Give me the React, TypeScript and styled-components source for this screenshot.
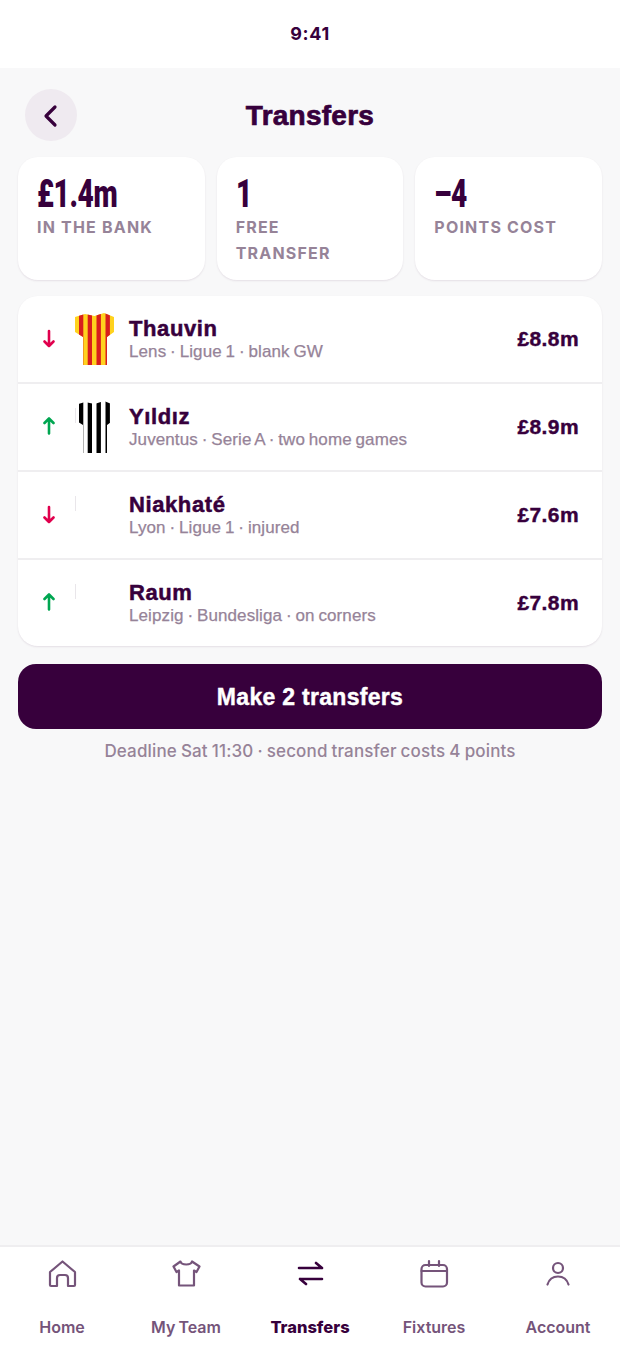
import React from "react";
import styled, { createGlobalStyle } from "styled-components";

const Global = createGlobalStyle`
  html, body { margin: 0; padding: 0; background: #f8f8f9; }
  body { font-family: Inter, "Liberation Sans", sans-serif; color: #37003c; }
  * { box-sizing: border-box; }
`;
const Grotesk = `"Liberation Sans", Inter, sans-serif`;
const Page = styled.div`
  width: 620px; height: 1347px; display: flex; flex-direction: column; background: #f8f8f9; overflow: hidden;
`;
const StatusBar = styled.div`
  height: 68px; background: #fff; display: flex; align-items: center; justify-content: center; padding-bottom: 2px;
  font-size: 18px; font-weight: 700; color: #37003c; letter-spacing: 0.7px;
`;
const Main = styled.main`
  flex: 1; display: flex; flex-direction: column; padding: 21px 18px 0;
`;
const Header = styled.header`
  display: grid; grid-template-columns: 52px 1fr 52px; align-items: center; padding: 0 7px; height: 52px;
`;
const BackButton = styled.button`
  width: 52px; height: 52px; border: 0; padding: 2px 0 0; border-radius: 50%; background: #efeaf0; color: #37003c;
  display: flex; align-items: center; justify-content: center;
`;
const Title = styled.h1`
  margin: 1px 0 0; text-align: center; font-family: ${Grotesk}; font-size: 28px; line-height: 34px; font-weight: 700;
  letter-spacing: 0.25px; color: #37003c; -webkit-text-stroke: 0.7px #37003c;
`;
const Stats = styled.section`
  display: grid; grid-template-columns: repeat(3, 1fr); gap: 12px; margin-top: 16px;
`;
const StatCard = styled.div`
  height: 123px; background: #fff; border-radius: 20px; padding: 16px 24px 16px 19px; box-shadow: 0 1px 2px rgba(55,0,60,.1);
`;
const StatValue = styled.div`
  font-family: Roboto, sans-serif; font-size: 38px; line-height: 42px; font-weight: 900; letter-spacing: -0.5px;
  color: #37003c; transform: scaleX(0.74); transform-origin: left center;
`;
const StatLabel = styled.div`
  font-size: 16px; line-height: 26px; font-weight: 700; letter-spacing: 1.2px; color: #968398; margin-top: -1px;
`;
const List = styled.section`
  margin-top: 16px; background: #fff; border-radius: 20px; box-shadow: 0 1px 2px rgba(55,0,60,.1); overflow: hidden;
`;
const Row = styled.div<{ $last?: boolean }>`
  height: ${(p) => (p.$last ? 86 : 88)}px; display: flex; align-items: center; padding: 0 23px 0 23px;
  border-bottom: ${(p) => (p.$last ? "0" : "2px solid #efeef0")};
`;
const Arrow = styled.div<{ $c: string }>`
  width: 16px; color: ${(p) => p.$c}; display: flex; justify-content: center; margin-right: 18px;
`;
const ShirtSlot = styled.div`
  width: 39px; height: 52px; margin-right: 15px; flex: none;
`;
const Info = styled.div`
  flex: 1; min-width: 0;
`;
const Name = styled.div`
  font-family: ${Grotesk}; font-size: 22px; line-height: 25px; font-weight: 700; color: #37003c;
  letter-spacing: 0.6px; -webkit-text-stroke: 0.5px #37003c;
`;
const Meta = styled.div`
  font-family: ${Grotesk}; font-size: 17px; line-height: 22px; color: #968398; font-weight: 400; letter-spacing: 0.1px;
  word-spacing: -1px; -webkit-text-stroke: 0.25px #968398;
`;
const Price = styled.div`
  font-family: ${Grotesk}; font-size: 21px; font-weight: 700; color: #37003c; letter-spacing: 0.4px; -webkit-text-stroke: 0.4px #37003c;
`;
const Cta = styled.button`
  margin-top: 18px; height: 65px; width: 100%; border: 0; border-radius: 18px; padding: 2px 0 0; background: #37003c; color: #fff;
  font: 700 23px ${Grotesk}; letter-spacing: 0.3px; -webkit-text-stroke: 0.4px #fff;
`;
const Note = styled.p`
  margin: 11px 0 0; text-align: center; font-size: 17px; line-height: 22px; font-weight: 500; color: #968398;
  letter-spacing: 0.15px; word-spacing: -0.7px;
`;
const Nav = styled.nav`
  height: 102px; background: #fff; border-top: 2px solid #efeef0; display: grid; grid-template-columns: repeat(5, 1fr);
`;
const NavItem = styled.div<{ $active?: boolean }>`
  display: flex; flex-direction: column; align-items: center; padding-top: 11px;
  color: ${(p) => (p.$active ? "#37003c" : "#75547a")};
  font-size: ${(p) => (p.$active ? 16.5 : 16)}px; font-weight: ${(p) => (p.$active ? 800 : 600)};
`;
const NavLabel = styled.span`
  margin-top: 28px; line-height: 22px; word-spacing: -1px;
`;

const ArrowIcon = ({ up }: { up?: boolean }) => (
  <svg width="14" height="20" viewBox="0 0 14 20" fill="none" stroke="currentColor" strokeWidth="2.6" strokeLinecap="round" strokeLinejoin="round">
    {up ? <path d="M7 16.5V1.5M2.5 6 7 1.5 11.5 6" /> : <path d="M7 2v15M2.5 12.5 7 17l4.5-4.5" />}
  </svg>
);

const shirtPath = "M0 4 10 1 19.5 3 29 0 39 4V19L32 24V52H8V24L0 19Z";
const bands: [number, number][] = [[4, 4.3], [12.7, 4.3], [21.5, 4.4], [30.5, 4.4]];

const Shirt = ({ id, base, stripe }: { id: string; base: string; stripe?: string }) => (
  <svg width="39" height="52" viewBox="0 0 39 52">
    <defs>
      <clipPath id={id}><path d={shirtPath} /></clipPath>
    </defs>
    <g clipPath={`url(#${id})`}>
      <rect width="39" height="52" fill={base} />
      {stripe && bands.map(([x, w]) => <rect key={x} x={x} y="0" width={w} height="52" fill={stripe} />)}
    </g>
    {base === "#ffffff" && <rect x="0" y="7" width="1" height="15" fill="#e9e6ea" />}
  </svg>
);

const rows = [
  { up: false, name: "Thauvin", meta: "Lens · Ligue 1 · blank GW", price: "£8.8m", shirt: <Shirt id="a" base="#ffd21e" stripe="#d81e1e" /> },
  { up: true, name: "Yıldız", meta: "Juventus · Serie A · two home games", price: "£8.9m", shirt: <Shirt id="b" base="#ffffff" stripe="#000000" /> },
  { up: false, name: "Niakhaté", meta: "Lyon · Ligue 1 · injured", price: "£7.6m", shirt: <Shirt id="c" base="#ffffff" /> },
  { up: true, name: "Raum", meta: "Leipzig · Bundesliga · on corners", price: "£7.8m", shirt: <Shirt id="d" base="#ffffff" /> },
];

const I = ({ children, w = 2.2 }: { children: React.ReactNode; w?: number }) => (
  <svg width="30" height="30" viewBox="0 0 30 30" fill="none" stroke="currentColor" strokeWidth={w} strokeLinecap="round" strokeLinejoin="round">{children}</svg>
);

const nav = [
  { label: "Home", icon: <I><path d="M3 14 15.5 3.5 28 14V27a1 1 0 0 1-1 1h-6V20a3 3 0 0 0-3-3h-5a3 3 0 0 0-3 3v8H4a1 1 0 0 1-1-1z" /></I> },
  { label: "My Team", icon: <I><path d="M9.5 3.5 2.5 8.5l3 5.5 2.5-1.5V27.5h15V12.5l2.5 1.5 3-5.5L21 3.5c-1 4-10.5 4-11.5 0z" /></I> },
  { label: "Transfers", active: true, icon: <I w={2.6}><path d="M4 10H27M21 5l6 5M27 21H5M5 21l6 5" /></I> },
  { label: "Fixtures", icon: <I><rect x="2.5" y="7" width="25.5" height="21.5" rx="4" /><path d="M2.5 13h25.5M10 3v5M20 3v5" /></I> },
  { label: "Account", icon: <I><circle cx="15" cy="10" r="5" /><path d="M4.5 26.5c1.5-5 5.5-8 10.5-8s9 3 10.5 8" /></I> },
];

export default function App() {
  return (
    <Page>
      <Global />
      <StatusBar>9:41</StatusBar>
      <Main>
        <Header>
          <BackButton aria-label="Back">
            <svg width="16" height="24" viewBox="0 0 16 24" fill="none" stroke="currentColor" strokeWidth="3.2" strokeLinecap="round" strokeLinejoin="round"><path d="M12 3 3 12l9 9" /></svg>
          </BackButton>
          <Title>Transfers</Title>
        </Header>
        <Stats>
          <StatCard><StatValue>£1.4m</StatValue><StatLabel>IN THE BANK</StatLabel></StatCard>
          <StatCard><StatValue>1</StatValue><StatLabel>FREE TRANSFER</StatLabel></StatCard>
          <StatCard><StatValue>–4</StatValue><StatLabel>POINTS COST</StatLabel></StatCard>
        </Stats>
        <List>
          {rows.map((r, i) => (
            <Row key={r.name} $last={i === rows.length - 1}>
              <Arrow $c={r.up ? "#00a651" : "#e0004d"}><ArrowIcon up={r.up} /></Arrow>
              <ShirtSlot>{r.shirt}</ShirtSlot>
              <Info><Name>{r.name}</Name><Meta>{r.meta}</Meta></Info>
              <Price>{r.price}</Price>
            </Row>
          ))}
        </List>
        <Cta>Make 2 transfers</Cta>
        <Note>Deadline Sat 11:30 · second transfer costs 4 points</Note>
      </Main>
      <Nav>
        {nav.map((n) => (
          <NavItem key={n.label} $active={n.active}>{n.icon}<NavLabel>{n.label}</NavLabel></NavItem>
        ))}
      </Nav>
    </Page>
  );
}
